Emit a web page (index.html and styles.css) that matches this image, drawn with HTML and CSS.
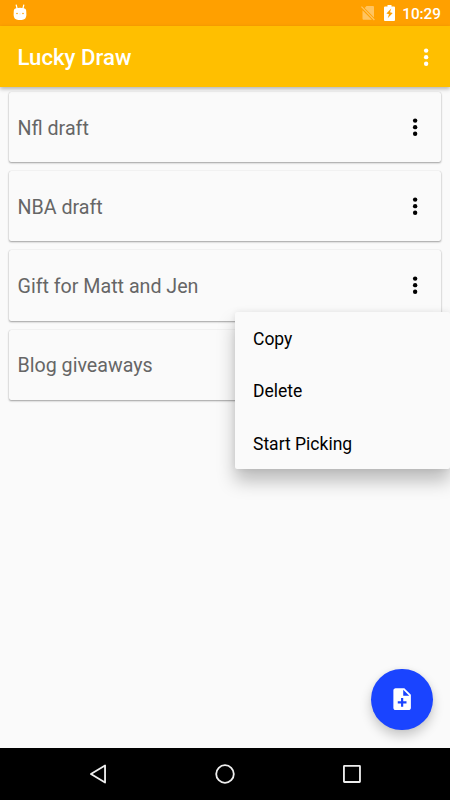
FILE: index.html
```html
<!DOCTYPE html>
<html lang="en">
<head>
<meta charset="utf-8">
<title>Lucky Draw</title>
<link rel="stylesheet" href="styles.css">
</head>
<body>
<svg class="defs" width="0" height="0"><defs>
<symbol id="more" viewBox="0 0 24 24"><circle cx="12" cy="6" r="2"/><circle cx="12" cy="12" r="2"/><circle cx="12" cy="18" r="2"/></symbol>
</defs></svg>
<div class="screen">
  <header class="status">
    <svg class="droid" viewBox="0 0 14 17"><path d="M3.2 1 4.2 5M10.8 1 9.8 5" stroke="#fff" stroke-width="1.2" stroke-linecap="round"/><path d="M3 4.3Q7 3.2 11 4.3Q13 4.5 13.2 6.5L13.4 11Q13 15 10.5 15.5Q7 16.5 3.5 15.5Q1 15 .6 11L.8 6.5Q1 4.5 3 4.3Z" fill="#fff"/><circle cx="4" cy="9.5" r=".8" fill="#ffa000"/><circle cx="10" cy="9.5" r=".8" fill="#ffa000"/><path d="M6.3 9.8h1.4L7 10.6Z" fill="#ffc46b"/></svg>
    <div class="tray">
      <svg class="nosim" viewBox="0 0 14 16"><path d="M5.500 1H12q1 0 1 1v10.400L3.700 2.900ZM1.500 5.200 10.900 14.800H2.500q-1 0-1-1Z" fill="#fff"/><path d="M.4 1.600 13.400 15" stroke="#fff" stroke-width="1.300"/></svg>
      <svg class="battery" viewBox="0 0 11 16"><path d="M3.500 0h4v1.500H10q1 0 1 1V15q0 1-1 1H1q-1 0-1-1V2.500q0-1 1-1h2.500Z" fill="#fff"/><path d="M7.200 3.600 2.400 8.600 5 9.200 3.700 13.300 8.700 8 6 7.300Z" fill="#ffa000"/></svg>
      <span class="clock">10:29</span>
    </div>
  </header>
  <div class="appbar"><h1>Lucky Draw</h1><svg class="more"><use href="#more"/></svg></div>
  <main class="list">
    <div class="card"><span>Nfl draft</span><svg class="more"><use href="#more"/></svg></div>
    <div class="card"><span>NBA draft</span><svg class="more"><use href="#more"/></svg></div>
    <div class="card"><span>Gift for Matt and Jen</span><svg class="more"><use href="#more"/></svg></div>
    <div class="card"><span>Blog giveaways</span></div>
  </main>
  <div class="menu"><div class="item">Copy</div><div class="item">Delete</div><div class="item">Start Picking</div></div>
  <div class="fab"><svg viewBox="0 0 24 24"><path fill="#fff" fill-rule="evenodd" d="M14 2H6c-1.100 0-1.990.9-1.990 2L4 20c0 1.100.89 2 1.990 2H18c1.100 0 2-.9 2-2V8l-6-6zm2 14h-3v3h-2v-3H8v-2h3v-3h2v3h3v2zm-3-7V3.500L18.500 9H13z"/></svg></div>
  <nav class="nav">
    <svg viewBox="0 0 24 24"><path d="M18.600 2.700V21.300L3.200 12Z"/></svg>
    <svg viewBox="0 0 24 24"><circle cx="12" cy="12" r="9.600"/></svg>
    <svg viewBox="0 0 24 24"><rect x="3.200" y="3.200" width="17.500" height="17.500" rx=".5"/></svg>
  </nav>
</div>
</body>
</html>
```
FILE: styles.css
```css
* { box-sizing: border-box; }
body { margin: 0; font-family: Roboto, "Liberation Sans", sans-serif; }
.defs { position: absolute; }
.screen { position: relative; width: 450px; height: 800px; display: flex; flex-direction: column; overflow: hidden; background: #fafafa; }
.status { height: 26px; flex: none; display: flex; align-items: center; justify-content: space-between; padding: 0 9px 0 13px; background: #ffa000; color: #fff; }
.droid { width: 14px; height: 17px; fill: none; margin-top: -2px; }
.tray { display: flex; align-items: center; }
.nosim { width: 14px; height: 16px; opacity: .38; margin-right: 9px; }
.battery { width: 11px; height: 16px; margin-right: 7.500px; }
.clock { font-size: 15.300px; font-weight: 500; line-height: 26px; padding-top: 2px; }
.appbar { position: relative; z-index: 1; height: 61px; flex: none; display: flex; align-items: center; justify-content: space-between; padding: 0 11px 0 17.500px; background: #ffbf00; color: #fff; box-shadow: 0 2px 4px rgba(0,0,0,.28); }
h1 { margin: 0; font-size: 22.200px; font-weight: 500; line-height: 26px; }
.more { width: 26.250px; height: 26.250px; fill: currentColor; }
.appbar .more { margin-top: 1px; }
.list { flex: 1; display: flex; flex-direction: column; gap: 9px; padding: 5px 8.750px; }
.card { height: 70.200px; flex: none; display: flex; align-items: center; justify-content: space-between; padding: 0 13.500px 0 8.750px; border-radius: 2px; background: #fafafa; box-shadow: 0 1px 2px rgba(0,0,0,.36), 0 0 1px rgba(0,0,0,.18); font-size: 19.650px; color: #666; }
.card span { line-height: 24px; padding-top: 3.200px; }
.card .more { color: #000; }
.menu { position: absolute; z-index: 2; left: 235px; top: 311.500px; width: 215px; border-radius: 2px; background: #fafafa; box-shadow: 0 12px 18px rgba(0,0,0,.25), 0 0 6px rgba(0,0,0,.08); }
.item { height: 52.500px; padding: 2px 18px 0; font-size: 17.500px; line-height: 50px; color: #000; }
.fab { position: absolute; left: 371.400px; top: 668.600px; width: 61.200px; height: 61.200px; border-radius: 50%; display: flex; align-items: center; justify-content: center; background: #1a44ff; box-shadow: 0 6px 12px rgba(0,0,0,.2), 0 0 4px rgba(0,0,0,.06); }
.fab svg { width: 26.250px; height: 26.250px; }
.nav { height: 52.500px; flex: none; display: flex; align-items: center; justify-content: center; gap: 104.500px; background: #000; }
.nav svg { width: 22px; height: 22px; fill: none; stroke: #eee; stroke-width: 2; stroke-linejoin: round; }
```
